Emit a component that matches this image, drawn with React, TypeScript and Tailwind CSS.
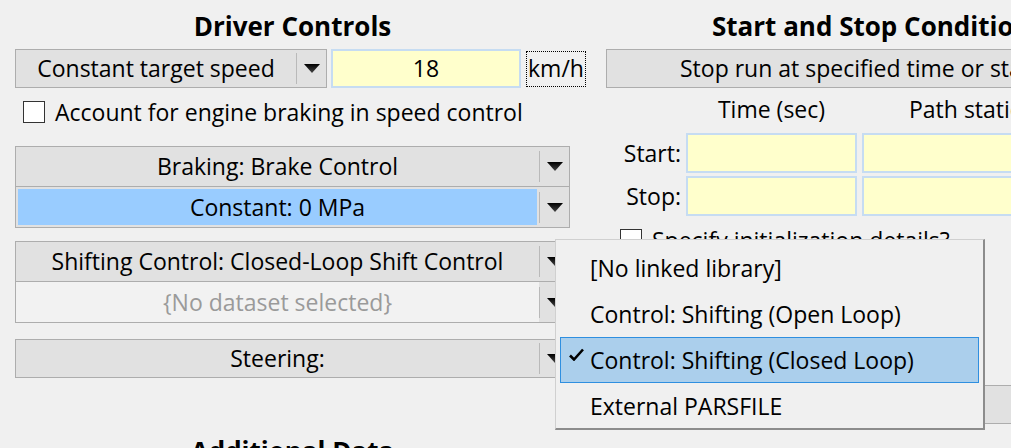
import React from "react";

function Arrow() {
  return (
    <svg width="16" height="9" viewBox="0 0 16 9">
      <defs>
        <linearGradient id="ag" x1="0" y1="0" x2="0" y2="1">
          <stop offset="0" stopColor="#000" />
          <stop offset="1" stopColor="#444" />
        </linearGradient>
      </defs>
      <path d="M0 0H16L8 9Z" fill="url(#ag)" />
    </svg>
  );
}

function ArrowCol({ bg = "bg-[#e1e1e1]" }: { bg?: string }) {
  return (
    <div className={`flex h-full items-center ${bg}`}>
      <div className="h-[31px] w-px bg-[#b9b9b9]" />
      <div className="flex w-[29px] items-center justify-center">
        <Arrow />
      </div>
    </div>
  );
}

function Combo({ label, className = "" }: { label: string; className?: string }) {
  return (
    <div className={`flex h-[39px] items-stretch border border-[#adadad] bg-[#e1e1e1] ${className}`}>
      <div className="flex flex-1 items-center justify-center whitespace-nowrap">{label}</div>
      <ArrowCol />
    </div>
  );
}

function Checkbox() {
  return <div className="h-[22px] w-[22px] shrink-0 border border-[#333333] bg-white" />;
}

function YellowInput({ className = "", children }: { className?: string; children?: React.ReactNode }) {
  return (
    <div className={`flex items-center justify-center border-2 border-[#c6dcf2] bg-[#ffffcc] ${className}`}>
      {children}
    </div>
  );
}

export default function App() {
  return (
    <div className="relative h-[448px] w-[1011px] overflow-hidden bg-[#f0f0f0] font-['Open_Sans',sans-serif] text-[23px] leading-none text-black">
      <div className="flex">
        {/* Left column */}
        <div className="w-[606px] shrink-0 pl-[15px]">
          <div className="flex h-[49px] w-[555px] items-center justify-center pt-[2px] text-[26px] font-bold">
            Driver Controls
          </div>
          <div className="flex h-[39px] items-center">
            <div className="flex h-[39px] w-[312px] items-stretch border border-[#adadad] bg-[#e1e1e1]">
              <div className="flex flex-1 items-center justify-center whitespace-nowrap">Constant target speed</div>
              <ArrowCol />
            </div>
            <YellowInput className="ml-[4px] h-[39px] w-[190px]">18</YellowInput>
            <div className="ml-[5px] flex h-[36px] w-[60px] items-center overflow-hidden border border-dotted border-black pl-[1px]">
              km/h
            </div>
          </div>
          <div className="mt-[13px] flex h-[22px] items-center pl-[8px]">
            <Checkbox />
            <span className="ml-[10px] whitespace-nowrap">Account for engine braking in speed control</span>
          </div>

          {/* Braking */}
          <div className="mt-[23px] w-[555px] border border-[#adadad] bg-[#e1e1e1]">
            <div className="flex h-[39px] items-stretch">
              <div className="flex flex-1 items-center justify-center">Braking: Brake Control</div>
              <ArrowCol />
            </div>
            <div className="flex h-[41px] items-stretch border-t border-[#adadad]">
              <div className="flex flex-1 p-[2px]">
                <div className="flex flex-1 items-center justify-center bg-[#99ccff]">Constant: 0 MPa</div>
              </div>
              <ArrowCol />
            </div>
          </div>

          {/* Shifting */}
          <div className="mt-[13px] w-[555px] border border-[#adadad] bg-[#e1e1e1]">
            <div className="flex h-[39px] items-stretch">
              <div className="flex flex-1 items-center justify-center whitespace-nowrap">
                Shifting Control: Closed-Loop Shift Control
              </div>
              <ArrowCol />
            </div>
            <div className="flex h-[41px] items-stretch border-t border-[#adadad]">
              <div className="flex flex-1 items-center justify-center bg-[#f2f2f2] text-[#9a9a9a]">
                {"{No dataset selected}"}
              </div>
              <ArrowCol />
            </div>
          </div>

          {/* Steering */}
          <Combo label="Steering:" className="mt-[16px] w-[555px]" />

          <div className="mt-[48px] flex h-[49px] w-[555px] items-center justify-center text-[26px] font-bold">
            Additional Data
          </div>
        </div>

        {/* Right column */}
        <div className="min-w-0 flex-1">
          <div className="flex h-[49px] items-center whitespace-nowrap pl-[106px] pt-[2px] text-[26px] font-bold">
            Start and Stop Conditions
          </div>
          <div className="flex h-[39px] w-[560px] items-center whitespace-nowrap border border-[#adadad] bg-[#e1e1e1] pl-[73px]">
            Stop run at specified time or station
          </div>
          <div className="grid grid-cols-[75px_171px_171px] gap-x-[5px] gap-y-[3px]">
            <div />
            <div className="flex h-[42px] items-center justify-center whitespace-nowrap">Time (sec)</div>
            <div className="flex h-[42px] items-center whitespace-nowrap pl-[47px]">Path station</div>
            <div className="flex h-[40px] items-center justify-end">Start:</div>
            <YellowInput className="h-[40px]" />
            <YellowInput className="h-[40px] w-[200px]" />
            <div className="flex h-[40px] items-center justify-end">Stop:</div>
            <YellowInput className="h-[40px]" />
            <YellowInput className="h-[40px] w-[200px]" />
          </div>
          <div className="mt-[13px] flex h-[22px] items-center pl-[14px]">
            <Checkbox />
            <span className="ml-[10px] whitespace-nowrap">Specify initialization details?</span>
          </div>
          <div className="ml-[0px] mt-[134px] h-[39px] w-[500px] border border-[#adadad] bg-[#e1e1e1]" />
        </div>
      </div>

      {/* Popup menu */}
      <div className="absolute left-[555px] top-[239px] h-[191px] w-[430px] border-b-2 border-l border-r-2 border-t border-b-[#8c8c8c] border-l-[#d0d0d0] border-r-[#8c8c8c] border-t-[#d0d0d0] bg-[#f0f0f0] pt-[5px]">
        <div className="flex h-[46px] items-center whitespace-nowrap pl-[34px]">[No linked library]</div>
        <div className="flex h-[46px] items-center whitespace-nowrap pl-[34px]">Control: Shifting (Open Loop)</div>
        <div className="relative mx-[4px] flex h-[46px] items-center whitespace-nowrap border border-[#2f8fe0] bg-[#abcfec] pl-[29px]">
          <svg className="absolute left-[8px] top-[10px]" width="15" height="13" viewBox="0 0 15 13">
            <path d="M1 7.5L5 11.5L14 1.5" fill="none" stroke="#000" strokeWidth="2.6" />
          </svg>
          Control: Shifting (Closed Loop)
        </div>
        <div className="flex h-[46px] items-center whitespace-nowrap pl-[34px]">External PARSFILE</div>
      </div>
    </div>
  );
}
